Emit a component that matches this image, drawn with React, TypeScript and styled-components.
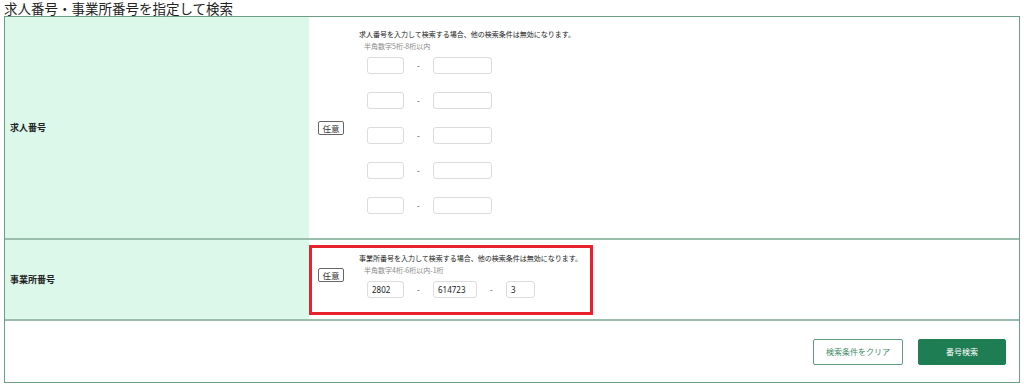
import React from "react";
import styled, { createGlobalStyle } from "styled-components";

const GlobalStyle = createGlobalStyle`
  body {
    margin: 0;
    background: #fff;
    font-family: "Noto Sans CJK JP", "Noto Sans", sans-serif;
    color: #222;
  }
`;

const Page = styled.div`
  width: 1024px;
  padding: 0 4px;
  box-sizing: border-box;
`;

const Heading = styled.h2`
  margin: 0;
  font-size: 13.5px;
  line-height: 16px;
  font-weight: normal;
  color: #222;
  height: 16px;
  white-space: nowrap;
`;

const Table = styled.div`
  width: 1016px;
  box-sizing: border-box;
  border: 1px solid #6e9d86;
`;

const Row = styled.div<{ $height: number; $last?: boolean }>`
  display: flex;
  height: ${(p) => p.$height}px;
  box-sizing: border-box;
  border-bottom: ${(p) => (p.$last ? "none" : "2px solid #9bbdac")};
`;

const Label = styled.div`
  width: 304px;
  flex-shrink: 0;
  background: #dcf8ea;
  display: flex;
  align-items: center;
  padding-left: 5px;
  box-sizing: border-box;
  font-size: 9px;
  font-weight: bold;
  color: #222;
`;

const Cell = styled.div<{ $inset?: number }>`
  flex: 1;
  display: flex;
  align-items: center;
  padding-left: ${(p) => p.$inset ?? 0}px;
`;

const Highlight = styled.div`
  display: flex;
  align-items: center;
  border: 3px solid #e8212c;
  padding: 4px 6px 14px 6px;
  width: 284px;
  box-sizing: border-box;
`;

const Badge = styled.span`
  display: inline-flex;
  align-items: center;
  justify-content: center;
  width: 26px;
  height: 14px;
  box-sizing: border-box;
  border: 1px solid #666;
  border-radius: 2px;
  font-size: 8.5px;
  color: #333;
  flex-shrink: 0;
  margin-right: 15px;
`;

const Fields = styled.div<{ $top?: number }>`
  display: flex;
  flex-direction: column;
  align-self: flex-start;
  padding-top: ${(p) => p.$top ?? 0}px;
`;

const Note = styled.div`
  font-size: 7px;
  line-height: 12px;
  color: #222;
  white-space: nowrap;
`;

const Hint = styled.div`
  font-size: 7px;
  line-height: 12px;
  color: #888;
  padding-left: 5px;
  margin-bottom: 5px;
`;

const InputRow = styled.div`
  display: flex;
  align-items: center;
  margin-left: 8px;
  height: 17px;
  & + & {
    margin-top: 18px;
  }
`;

const Field = styled.input<{ $w: number }>`
  width: ${(p) => p.$w}px;
  height: 17px;
  box-sizing: border-box;
  border: 1px solid #dcdcdc;
  border-radius: 3px;
  padding: 0 4px;
  font-family: "Noto Sans", sans-serif;
  font-size: 8px;
  color: #222;
  outline: none;
`;

const Dash = styled.span`
  width: 29px;
  text-align: center;
  font-size: 8px;
  color: #333;
`;

const Actions = styled.div`
  flex: 1;
  display: flex;
  justify-content: flex-end;
  align-items: center;
  gap: 15px;
  padding-right: 13px;
`;

const Button = styled.button<{ $primary?: boolean }>`
  height: 26px;
  width: ${(p) => (p.$primary ? 88 : 90)}px;
  box-sizing: border-box;
  border-radius: 2px;
  border: 1px solid ${(p) => (p.$primary ? "#1f7d54" : "#5f9d80")};
  background: ${(p) => (p.$primary ? "#1f7d54" : "#fff")};
  color: ${(p) => (p.$primary ? "#fff" : "#3f8a68")};
  font-family: "Noto Sans CJK JP", sans-serif;
  font-size: 8px;
  padding: 0;
  cursor: pointer;
`;

const jobRows = [0, 1, 2, 3, 4];

export default function App() {
  return (
    <Page>
      <GlobalStyle />
      <Heading>求人番号・事業所番号を指定して検索</Heading>
      <Table>
        <Row $height={223}>
          <Label>求人番号</Label>
          <Cell $inset={9}>
            <Badge>任意</Badge>
            <Fields $top={11}>
              <Note>求人番号を入力して検索する場合、他の検索条件は無効になります。</Note>
              <Hint>半角数字5桁-8桁以内</Hint>
              {jobRows.map((i) => (
                <InputRow key={i}>
                  <Field $w={37} />
                  <Dash>-</Dash>
                  <Field $w={59} />
                </InputRow>
              ))}
            </Fields>
          </Cell>
        </Row>
        <Row $height={81}>
          <Label>事業所番号</Label>
          <Cell>
            <Highlight>
              <Badge>任意</Badge>
              <Fields>
                <Note>事業所番号を入力して検索する場合、他の検索条件は無効になります。</Note>
                <Hint>半角数字4桁-6桁以内-1桁</Hint>
                <InputRow>
                  <Field $w={37} defaultValue="2802" />
                  <Dash>-</Dash>
                  <Field $w={44} defaultValue="614723" />
                  <Dash>-</Dash>
                  <Field $w={29} defaultValue="3" />
                </InputRow>
              </Fields>
            </Highlight>
          </Cell>
        </Row>
        <Row $height={61} $last>
          <Actions>
            <Button>検索条件をクリア</Button>
            <Button $primary>番号検索</Button>
          </Actions>
        </Row>
      </Table>
    </Page>
  );
}
